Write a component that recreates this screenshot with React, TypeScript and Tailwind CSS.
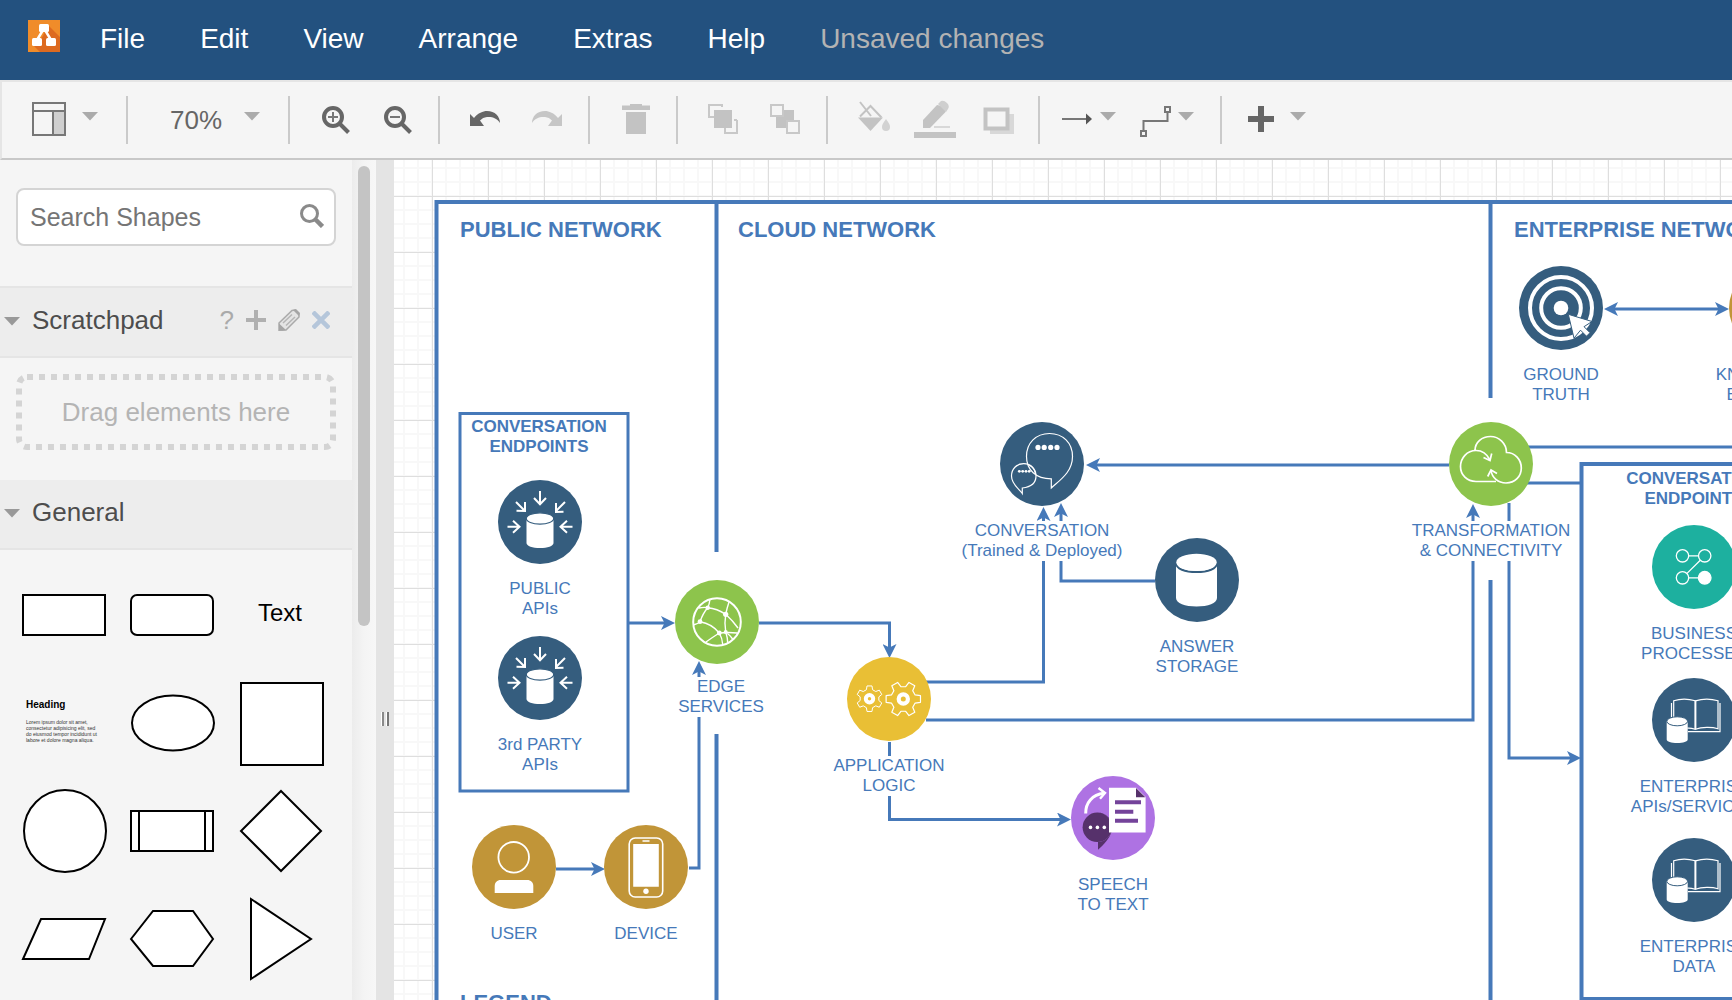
import type { ReactNode } from "react";

const LINE = "#4679b9";
const NAVY = "#355d7e";
const GREEN = "#8dc44c";
const GOLD = "#c19538";

/* ---------- toolbar ---------- */

function Separator() {
  return <div className="h-12 w-[2px] shrink-0 bg-[#cacaca]" />;
}

function Caret() {
  return (
    <svg className="block h-12 w-4 shrink-0" viewBox="0 0 16 48" aria-hidden="true">
      <path d="M0 16h16l-8 8.500z" fill="#ababab" />
    </svg>
  );
}

type ToolProps = { label: string; className?: string; children: ReactNode };

function Tool({ label, className = "", children }: ToolProps) {
  return (
    <button type="button" aria-label={label} className={`flex shrink-0 items-center ${className}`}>
      {children}
    </button>
  );
}

function Glyph({ size, box, children }: { size: string; box: string; children: ReactNode }) {
  return (
    <svg className={`block h-12 shrink-0 ${size}`} viewBox={box} fill="none" aria-hidden="true">
      {children}
    </svg>
  );
}

function Magnifier({ plus }: { plus?: boolean }) {
  return (
    <Glyph size="w-7" box="0 0 28 48">
      <circle cx="11" cy="21" r="9" stroke="#666" strokeWidth="4" />
      <path d="M17.500 27.500 26.500 36.500" stroke="#666" strokeWidth="4" />
      <path d={plus ? "M6 21h10M11 16v10" : "M6 21h10"} stroke="#777" strokeWidth="2" />
    </Glyph>
  );
}

const UNDO_PATH =
  "M0 18l4 4C8 17 13 15 17 15c8 0 13 5.500 13 12-3-5-8-6.500-13-6-3 .3-5 1.500-7 3.500L14 30H0z";

function Toolbar() {
  return (
    <div className="flex h-20 shrink-0 items-center overflow-hidden border-y-2 border-l-2 border-t-[#e5e5e5] border-b-[#c8c8c8] border-l-[#e5e5e5] bg-[#f5f5f5]">
      <Tool label="View layout" className="gap-4 pr-7 pl-[30px]">
        <Glyph size="w-[34px]" box="0 0 34 48">
          <path d="M21 15h12v24H21z" fill="#cfcfcf" />
          <path d="M1 7h32v32H1zM1 15h32M21 15v24" stroke="#777" strokeWidth="2" />
        </Glyph>
        <Caret />
      </Tool>
      <Separator />
      <Tool label="Zoom level" className="gap-[22px] pr-7 pl-[42px]">
        <span className="text-[26px] leading-8 text-[#666]">70%</span>
        <Caret />
      </Tool>
      <Separator />
      <div className="flex gap-[34px] pr-[26px] pl-8">
        <Tool label="Zoom in">
          <Magnifier plus />
        </Tool>
        <Tool label="Zoom out">
          <Magnifier />
        </Tool>
      </div>
      <Separator />
      <div className="flex gap-8 pr-[26px] pl-[30px]">
        <Tool label="Undo">
          <Glyph size="w-[30px]" box="0 0 30 48">
            <path d={UNDO_PATH} fill="#666" />
          </Glyph>
        </Tool>
        <Tool label="Redo">
          <Glyph size="w-[30px]" box="0 0 30 48">
            <path d={UNDO_PATH} fill="#c6c6c6" transform="matrix(-1 0 0 1 30 0)" />
          </Glyph>
        </Tool>
      </div>
      <Separator />
      <Tool label="Delete" className="pr-[26px] pl-8">
        <Glyph size="w-7" box="0 0 28 48">
          <path d="M0 9.500h8V8h12v1.500h8V14H0zM4 16h20v22H4z" fill="#c3c3c3" />
        </Glyph>
      </Tool>
      <Separator />
      <div className="flex gap-8 pr-[26px] pl-[30px]">
        <Tool label="To front">
          <Glyph size="w-[30px]" box="0 0 30 48">
            <path d="M14 11V9H1v12h5M29 24v13H17v-5M26 24h3" stroke="#c8c8c8" strokeWidth="2" />
            <path d="M6 14h18v18H6z" fill="#c3c3c3" />
          </Glyph>
        </Tool>
        <Tool label="To back">
          <Glyph size="w-[30px]" box="0 0 30 48">
            <path d="M6 14h18v18H6z" fill="#c3c3c3" />
            <path d="M1 9h12v11H1zM17 25h12v12H17z" fill="#f5f5f5" stroke="#c8c8c8" strokeWidth="2" />
          </Glyph>
        </Tool>
      </div>
      <Separator />
      <div className="flex pr-6 pl-7">
        <Tool label="Fill color" className="pr-6">
          <Glyph size="w-[34px]" box="0 0 34 48">
            <path d="M4 6 15 20M4 20.500 14.500 10l11 11.500" stroke="#c3c3c3" strokeWidth="2" />
            <path d="M2 21.500h25L14.500 35z" fill="#c3c3c3" />
            <path d="M30 23c3 4 4 6 4 8a4 4 0 0 1-8 0c0-2 1-4 4-8z" fill="#d2d2d2" />
          </Glyph>
        </Tool>
        <Tool label="Line color" className="pr-[26px]">
          <Glyph size="w-[42px]" box="0 0 42 48">
            <path d="M9 24 23 9l10 2-1.500 5L16 32H9z" fill="#c3c3c3" />
            <path d="M24 8l3-3q3-1 6 2t1 6l-2 3z" fill="#cfcfcf" />
            <path d="M20 31h16" stroke="#d8d8d8" strokeWidth="2" />
            <path d="M0 36h42v6H0z" fill="#c3c3c3" />
          </Glyph>
        </Tool>
        <Tool label="Shadow">
          <Glyph size="w-8" box="0 0 32 48">
            <path d="M8 18h24v20H8z" fill="#d8d8d8" />
            <path d="M3.500 13.500h22v19h-22z" fill="#f5f5f5" stroke="#c3c3c3" strokeWidth="4" />
          </Glyph>
        </Tool>
      </div>
      <Separator />
      <div className="flex gap-6 pr-[26px] pl-[22px]">
        <Tool label="Connection" className="gap-2">
          <Glyph size="w-[30px]" box="0 0 30 48">
            <path d="M0 23h26" stroke="#777" strokeWidth="2" />
            <path d="M24 17.500l6 5.500-6 5.500z" fill="#555" />
          </Glyph>
          <Caret />
        </Tool>
        <Tool label="Waypoints" className="gap-[6px]">
          <Glyph size="w-8" box="0 0 32 48">
            <path d="M1 35h5v5H1zM25 11h5v5h-5zM3.500 35V25h24v-9" stroke="#777" strokeWidth="2" />
          </Glyph>
          <Caret />
        </Tool>
      </div>
      <Separator />
      <Tool label="Insert" className="gap-[14px] pl-[26px]">
        <Glyph size="w-7" box="0 0 28 48">
          <path d="M0 23h26M13 10v26" stroke="#666" strokeWidth="6" />
        </Glyph>
        <Caret />
      </Tool>
    </div>
  );
}

/* ---------- sidebar ---------- */

const SHAPES: { name: string; art: ReactNode }[] = [
  { name: "Rectangle", art: <rect x="13" y="34" width="82" height="40" /> },
  { name: "Rounded rectangle", art: <rect x="13" y="34" width="82" height="40" rx="6" /> },
  { name: "Text", art: null },
  { name: "Textbox", art: null },
  { name: "Ellipse", art: <ellipse cx="55" cy="54" rx="41" ry="27.500" /> },
  { name: "Square", art: <rect x="15" y="14" width="82" height="82" /> },
  { name: "Circle", art: <circle cx="55" cy="54" r="41" /> },
  { name: "Process", art: <path d="M13 34h82v40H13zM21 34v40M87 34v40" /> },
  { name: "Diamond", art: <path d="M55 14 95 54 55 94 15 54z" /> },
  { name: "Parallelogram", art: <path d="M13 74 31 34h64L79 74z" /> },
  { name: "Hexagon", art: <path d="M13 54 35 26h40l20 28-20 27H35z" /> },
  { name: "Triangle", art: <path d="M25 14 85 54 25 94z" /> },
];

function ShapeCell({ name, art }: { name: string; art: ReactNode }) {
  if (name === "Text") {
    return (
      <button type="button" className="flex size-[108px] items-center justify-center pb-1 text-2xl text-black">
        Text
      </button>
    );
  }
  if (name === "Textbox") {
    return (
      <button type="button" className="flex size-[108px] flex-col justify-center gap-2 pb-1 pl-4 text-left whitespace-nowrap">
        <span className="block text-[10px] leading-3 font-bold text-black">Heading</span>
        <span className="block text-[5px] leading-[6px] text-[#333]">
          Lorem ipsum dolor sit amet,
          <br />
          consectetur adipisicing elit, sed
          <br />
          do eiusmod tempor incididunt ut
          <br />
          labore et dolore magna aliqua.
        </span>
      </button>
    );
  }
  return (
    <button type="button" aria-label={name} className="size-[108px]">
      <svg className="block size-[108px]" viewBox="0 0 108 108" fill="#fff" stroke="#000" strokeWidth="2" aria-hidden="true">
        {art}
      </svg>
    </button>
  );
}

function SectionTitle({ children }: { children: ReactNode }) {
  return (
    <button type="button" className="flex items-center gap-3 pl-1 text-[26px] leading-8 text-[#4d4d4d]">
      <svg className="size-4" viewBox="0 0 16 16" aria-hidden="true">
        <path d="M0 5h16l-8 8.500z" fill="#999" />
      </svg>
      {children}
    </button>
  );
}

function Sidebar() {
  return (
    <aside className="flex w-[376px] shrink-0 overflow-hidden bg-[#f5f5f5]">
      <div className="flex w-[352px] shrink-0 flex-col">
        <div className="relative mx-4 mt-7 shrink-0">
          <input
            type="search"
            aria-label="Search Shapes"
            placeholder="Search Shapes"
            className="h-[58px] w-full rounded-lg border-2 border-[#d4d4d4] bg-white pr-12 pl-3 text-[25px] text-[#4d4d4d] outline-none placeholder:text-[#757575]"
          />
          <button type="button" aria-label="Search" className="absolute top-4 right-3">
            <svg className="block size-6" viewBox="0 0 24 24" fill="none" stroke="#8a8a8a" aria-hidden="true">
              <circle cx="9.500" cy="9.500" r="8" strokeWidth="3" />
              <path d="m15.500 15.500 7 7" strokeWidth="4.500" />
            </svg>
          </button>
        </div>
        <div className="mt-10 flex h-[72px] shrink-0 items-center justify-between border-y-2 border-[#e5e5e5] bg-[#ededed] pr-[22px] pb-1">
          <SectionTitle>Scratchpad</SectionTitle>
          <div className="flex items-center gap-3 text-[#aaa]">
            <button type="button" aria-label="Help" className="text-[26px] leading-8">
              ?
            </button>
            <button type="button" aria-label="Add">
              <svg className="block size-5" viewBox="0 0 20 20" stroke="#b0b0b0" strokeWidth="4" aria-hidden="true">
                <path d="M0 10h20M10 0v20" />
              </svg>
            </button>
            <button type="button" aria-label="Edit scratchpad">
              <svg className="block size-[22px]" viewBox="0 0 22 22" fill="none" aria-hidden="true">
                <path d="M1 14 14 1.500l3-.5 4 4v3L8 21l-7 .5z" fill="#e4e4e4" stroke="#aaa" strokeWidth="1.500" />
                <path d="M1 14.500 8 21H1zM15 1l3-1 4 4-1 3z" fill="#a5a5a5" />
                <path d="m5 14 9-8.500M8 16.500 17 8" stroke="#b5b5b5" strokeWidth="1.500" />
              </svg>
            </button>
            <button type="button" aria-label="Close scratchpad">
              <svg className="block size-[18px]" viewBox="0 0 18 18" stroke="#b5c6da" strokeWidth="4.500" aria-hidden="true">
                <path d="m1 1 16 16M17 1 1 17" />
              </svg>
            </button>
          </div>
        </div>
        <div className="relative mx-4 mt-4 flex h-[76px] shrink-0 items-center justify-center text-[26px] leading-8 text-[#b4b4b4]">
          <svg className="absolute inset-0" width="320" height="76" viewBox="0 0 320 76" fill="none" aria-hidden="true">
            <rect x="3" y="3" width="314" height="70" rx="8" stroke="#d4d4d4" strokeWidth="6" strokeDasharray="6 6" />
          </svg>
          Drag elements here
        </div>
        <div className="mt-[30px] flex h-[70px] shrink-0 items-center border-b-2 border-[#e5e5e5] bg-[#ededed] pb-1">
          <SectionTitle>General</SectionTitle>
        </div>
        <div className="grid grid-cols-[108px_108px_108px] pt-[11px] pl-[10px]">
          {SHAPES.map((s) => (
            <ShapeCell key={s.name} name={s.name} art={s.art} />
          ))}
        </div>
      </div>
      <div className="flex flex-1 justify-center bg-linear-to-r from-[#ececec] via-[#f4f4f4] to-[#f7f7f7] pt-[6px]">
        <div className="h-[460px] w-3 rounded-full bg-[#c4c4c4]" />
      </div>
    </aside>
  );
}

/* ---------- diagram icons, drawn on an 84 x 84 disc ---------- */

function gear(cx: number, cy: number, outer: number, inner: number, turn: number) {
  const points: string[] = [];
  for (let i = 0; i < 6; i++) {
    const mid = turn + i * 60;
    const corners: [number, number][] = [
      [-19, inner],
      [-11, outer],
      [11, outer],
      [19, inner],
    ];
    for (const [offset, radius] of corners) {
      const a = ((mid + offset) * Math.PI) / 180;
      points.push(`${(cx + radius * Math.cos(a)).toFixed(2)} ${(cy + radius * Math.sin(a)).toFixed(2)}`);
    }
  }
  return `M${points.join("L")}z`;
}

const apiArt = (
  <g fill="none" stroke="#fff" strokeWidth="2">
    <path d="M28.500 39v24c0 3 6 5 13.500 5s13.500-2 13.500-5V39z" fill="#fff" stroke="none" />
    <ellipse cx="42" cy="38.500" rx="13.700" ry="5.700" fill="#fff" stroke={NAVY} strokeWidth="1.200" />
    <path d="M42 11v13M36 18l6 6.300 6-6.300M9.500 46.700h12M15 40.700l6.500 6-6.500 6M74.500 46.700h-12M69 40.700l-6.500 6 6.500 6M18 22l9 9M18.500 30.700l8.500.3V22M67 22l-9 9M65.500 31.700 58 32v-9" />
  </g>
);

const globeArt = (
  <g fill="none" stroke="#fff" strokeWidth="1.400">
    <circle cx="42" cy="42" r="23.800" strokeWidth="2" />
    <path d="M35 19q-.5 5-2.300 8.700Q28 33 25 41.700q-2 2-6 3M24 28q5-1 8.700-.3Q42 28.500 50.700 34.300 58 41 63 48M54 22q-2 6-3.300 12.300 -1.500 9 0 17.700 2 6 2 11M25 41.700q12 2 19.300 11.300 3 5 3.500 12M44.300 53Q38 57 31 62M44.300 53q9-1 18 0M50.700 52q4 3 7 7" />
    <g fill="#fff" stroke="none">
      <circle cx="32.700" cy="27.700" r="2.200" />
      <circle cx="50.700" cy="34.300" r="2.600" />
      <circle cx="25" cy="41.700" r="2.400" />
      <circle cx="44.300" cy="53" r="2.400" />
      <circle cx="50.700" cy="52" r="2" />
    </g>
  </g>
);

const chatArt = (
  <g fill="none" stroke="#fff" strokeWidth="1.200">
    <path d="M51.300 56.800V66C60 58 72.500 50 72.500 34.500c0-13.500-9.500-23-23-23s-23 9.500-23 23 9.500 22.300 24.800 22.300z" />
    <path d="M22.300 66v5.500C19 66.500 11.500 62.500 11.500 54c0-7 5-12.300 12.200-12.300S36 47 36 54c0 7.500-5 11-13.700 12z" />
    <path d="M29 43c3.500 1.800 6 5 6.500 9" />
    <g fill="#fff" stroke="none">
      <circle cx="38" cy="25.400" r="2.600" />
      <circle cx="44.200" cy="25.400" r="2.600" />
      <circle cx="50.700" cy="25.400" r="2.600" />
      <circle cx="57" cy="25.400" r="2.600" />
      <circle cx="19.300" cy="49.300" r="1.400" />
      <circle cx="22.700" cy="49.300" r="1.400" />
      <circle cx="26" cy="49.300" r="1.400" />
      <circle cx="29.200" cy="49.300" r="1.400" />
    </g>
  </g>
);

const storageArt = (
  <g fill="#fff">
    <path d="M21 26v34c0 5 9 8.500 20.500 8.500S62 65 62 60V26z" />
    <path d="M21 25c0 6 9 9 20.500 9S62 31 62 25" fill="none" stroke={NAVY} strokeWidth="2" />
    <path d="M20 22h43v3H20z" fill={NAVY} />
    <ellipse cx="41.500" cy="24.300" rx="20.200" ry="8.600" />
  </g>
);

const gearsArt = (
  <g fill="none" stroke="#fff">
    <path d={gear(22.5, 41.7, 13, 9.5, 30)} strokeWidth="1" strokeLinejoin="round" />
    <path d={gear(56.3, 42, 17.5, 12.5, 0)} strokeWidth="1.200" strokeLinejoin="round" />
    <circle cx="22.500" cy="41.700" r="3.700" strokeWidth="4" />
    <circle cx="56.300" cy="42" r="4.600" strokeWidth="4.200" />
  </g>
);

const speechArt = (
  <g fill="none">
    <path d="M26.300 36.600a14.700 14.700 0 1 1 0 29.400h.7v7.700C33 69 38.500 62 40.500 56V46a14.700 14.700 0 0 0-14.200-9.400z" fill="#56316b" />
    <circle cx="26.300" cy="51.300" r="14.700" fill="#56316b" />
    <g fill="#fff">
      <circle cx="19.500" cy="51.400" r="1.800" />
      <circle cx="26.400" cy="51.400" r="1.800" />
      <circle cx="33.300" cy="51.400" r="1.800" />
    </g>
    <path d="M38 11.700h27.300l9.300 9.300v35.500H38z" fill="#fff" />
    <path d="M65 12v9.200h9.300z" fill="#56316b" />
    <path d="M44 26.300h26M44 35.700h18.300M44 44.700h23" stroke="#74439a" strokeWidth="4" />
    <path d="M14.700 37.500C14.500 27 21 18.500 33 17.300" stroke="#fff" strokeWidth="3" />
    <path d="M27.500 12l6.500 5-5 5.700" stroke="#fff" strokeWidth="2.400" />
  </g>
);

const targetArt = (
  <g fill="none" stroke="#fff" strokeWidth="4">
    <circle cx="42" cy="42" r="31" />
    <circle cx="42" cy="42" r="19.800" />
    <circle cx="42" cy="42" r="7.300" fill="#fff" stroke="none" />
    <path d="M49.300 48.300 73 55.500l-8 5.200 6 6-3.500 3.500-6-6-6.500 8z" fill="#fff" stroke={NAVY} strokeWidth="1" />
  </g>
);

const cloudArt = (
  <g fill="none" stroke="#fff" strokeWidth="1.700">
    <path d="M47 59.500H27c-9 0-15.500-6.500-15.500-15S18 28.500 27 28.500c6 0 11 3.500 14 9.500M26 28.500c0-8.500 7-14 15.500-14s16 7 16 16c8.500 0 14.800 7 14.800 15.500S66 61 57 61c-8 0-14-5.500-15-12.500" />
    <path d="M34.500 35.500l6.500 3 1.700-7M38.700 54.500 42 48l6 3.500" />
  </g>
);

const processArt = (
  <g fill="none" stroke="#fff" strokeWidth="1.300">
    <path d="M36.700 30.800h9.700M48.300 35.200 35 48.400M36.700 52.800h9.700" />
    <circle cx="30.500" cy="30.800" r="6.200" />
    <circle cx="52.700" cy="30.800" r="6.200" />
    <circle cx="30.500" cy="52.800" r="6.200" />
    <circle cx="52.700" cy="52.800" r="6.300" fill="#fff" />
  </g>
);

const bookArt = (
  <g fill="none" stroke="#fff" strokeWidth="1.200">
    <path d="M21.700 40V22.800c6-2 15-2 21.600 0 7-2 16-2 22.700 0v28c-6-2-16-2-22.700.5-3-1-5-1.500-8-1.200" />
    <path d="M43.400 22.500v29" strokeWidth="2" />
    <path d="M19.500 25v14M68 25v28.700H36" />
    <path d="M14.700 44v17.500c0 2 4.500 3.500 10.500 3.500s10.500-1.500 10.500-3.500V44z" fill="#fff" stroke="none" />
    <ellipse cx="25.200" cy="43.300" rx="10.400" ry="4.500" fill="#fff" stroke={NAVY} strokeWidth="1" />
  </g>
);

const userArt = (
  <g>
    <circle cx="41.700" cy="32.300" r="15.300" fill="none" stroke="#fff" strokeWidth="1.800" />
    <path d="M22.700 68v-7c0-3.500 2.500-6 6-6h26.600c3.500 0 6 2.500 6 6v7z" fill="#fff" />
  </g>
);

const phoneArt = (
  <g>
    <rect x="25.200" y="13" width="33.500" height="59" rx="6" fill="none" stroke="#fff" strokeWidth="1.600" />
    <path d="M29.200 19h25.600v42.700H29.200zM38.500 15.300h7v1.500h-7z" fill="#fff" />
    <circle cx="42" cy="66.300" r="2.700" fill="#fff" />
  </g>
);

/* ---------- diagram ---------- */

type DiagramNode = { at: string; color: string; art: ReactNode; label: string[]; labelClass?: string };

const NODES: DiagramNode[] = [
  { at: "left-[66px] top-[320px]", color: NAVY, art: apiArt, label: ["PUBLIC", "APIs"] },
  { at: "left-[66px] top-[476px]", color: NAVY, art: apiArt, label: ["3rd PARTY", "APIs"] },
  { at: "left-[243px] top-[420px]", color: GREEN, art: globeArt, label: ["EDGE", "SERVICES"], labelClass: "ml-2 -mt-[2px]" },
  { at: "left-[40px] top-[665px]", color: GOLD, art: userArt, label: ["USER"] },
  { at: "left-[172px] top-[665px]", color: GOLD, art: phoneArt, label: ["DEVICE"] },
  { at: "left-[415px] top-[497px]", color: "#e9bf35", art: gearsArt, label: ["APPLICATION", "LOGIC"] },
  { at: "left-[639px] top-[616px]", color: "#ae72e3", art: speechArt, label: ["SPEECH", "TO TEXT"] },
  { at: "left-[568px] top-[262px]", color: NAVY, art: chatArt, label: ["CONVERSATION", "(Trained & Deployed)"] },
  { at: "left-[723px] top-[378px]", color: NAVY, art: storageArt, label: ["ANSWER", "STORAGE"] },
  { at: "left-[1087px] top-[106px]", color: NAVY, art: targetArt, label: ["GROUND", "TRUTH"] },
  { at: "left-[1017px] top-[262px]", color: GREEN, art: cloudArt, label: ["TRANSFORMATION", "& CONNECTIVITY"] },
  { at: "left-[1297px] top-[106px]", color: GOLD, art: userArt, label: ["KNOWLEDGE", "ENGINEER"] },
  { at: "left-[1220px] top-[365px]", color: "#1db09f", art: processArt, label: ["BUSINESS", "PROCESSES"] },
  { at: "left-[1220px] top-[518px]", color: NAVY, art: bookArt, label: ["ENTERPRISE", "APIs/SERVICES"] },
  { at: "left-[1220px] top-[678px]", color: NAVY, art: bookArt, label: ["ENTERPRISE", "DATA"] },
];

const HEADINGS = [
  { at: "left-[66px] top-[58px]", text: "PUBLIC NETWORK" },
  { at: "left-[344px] top-[58px]", text: "CLOUD NETWORK" },
  { at: "left-[1120px] top-[58px]", text: "ENTERPRISE NETWORK" },
  { at: "left-[66px] top-[831px]", text: "LEGEND" },
];

const ARROWS = [
  "M234 463H273",
  "M365 463H495.500V490",
  "M532 522H649.500V355",
  "M532 560H1079V352",
  "M495.500 582V659.500H669",
  "M761 421H667V351",
  "M1055 305H700",
  "M1115 343V598H1179",
  "M162 709H203",
  "M295 708H305V509",
];

function Edges() {
  return (
    <svg className="absolute top-0 left-0 overflow-visible" width="1338" height="840" viewBox="0 0 1338 840" fill="none" stroke={LINE} aria-hidden="true">
      <defs>
        <marker id="arrow" markerUnits="userSpaceOnUse" markerWidth="14" markerHeight="14" refX="6" refY="7" orient="auto-start-reverse">
          <path d="M14 7 0 0l3.500 7L0 14z" fill={LINE} stroke="none" />
        </marker>
      </defs>
      <path d="M42.500 900V42H2600V900z" fill="#fff" strokeWidth="4" />
      <path d="M322.500 42V392M322.500 574V900M1096.500 42V238M1096.500 420V900" strokeWidth="4" />
      <rect x="66" y="253.500" width="168" height="377.500" strokeWidth="3" />
      <rect x="1187.500" y="304" width="400" height="535" strokeWidth="4" />
      <g strokeWidth="3">
        {ARROWS.map((d) => (
          <path key={d} d={d} markerEnd="url(#arrow)" />
        ))}
        <path d="M1218 149H1327" markerStart="url(#arrow)" markerEnd="url(#arrow)" />
        <path d="M1130 287H1500M1130 323H1187" />
      </g>
    </svg>
  );
}

function BoxTitle({ at }: { at: string }) {
  return (
    <div className={`absolute w-40 text-center text-[17px] leading-5 font-bold ${at}`}>
      CONVERSATION
      <br />
      ENDPOINTS
    </div>
  );
}

function Canvas() {
  return (
    <main className="relative min-w-0 flex-1 overflow-hidden bg-white bg-[linear-gradient(#dedede_1px,transparent_1px),linear-gradient(90deg,#dedede_1px,transparent_1px),linear-gradient(#f8f8f8_2px,transparent_2px),linear-gradient(90deg,#f8f8f8_2px,transparent_2px)] bg-size-[56px_56px,56px_56px,14px_14px,14px_14px] bg-position-[38px_36px,38px_36px,9px_7px,9px_7px] text-[#4679b9]">
      <Edges />
      {HEADINGS.map((h) => (
        <h2 key={h.text} className={`absolute text-[22px] leading-6 font-bold whitespace-nowrap ${h.at}`}>
          {h.text}
        </h2>
      ))}
      <BoxTitle at="left-[65px] top-[257px]" />
      <BoxTitle at="left-[1220px] top-[309px]" />
      {NODES.map((n) => (
        <div key={n.at} className={`absolute flex w-40 flex-col items-center gap-[15px] ${n.at}`}>
          <svg className="block size-[84px] shrink-0" viewBox="0 0 84 84" aria-hidden="true">
            <circle cx="42" cy="42" r="42" fill={n.color} />
            {n.art}
          </svg>
          <div className={`bg-white text-center text-[17px] leading-5 whitespace-nowrap ${n.labelClass ?? ""}`}>
            {n.label.map((line) => (
              <div key={line}>{line}</div>
            ))}
          </div>
        </div>
      ))}
    </main>
  );
}

/* ---------- page ---------- */

const MENUS = ["File", "Edit", "View", "Arrange", "Extras", "Help"];

function Header() {
  return (
    <header className="flex h-20 shrink-0 items-center overflow-hidden bg-[#23517f] pb-[2px] pl-7 text-[28px] leading-8 whitespace-nowrap text-white">
      <a href="#" aria-label="Home" className="mr-10 shrink-0 pb-[6px]">
        <svg className="block size-8" viewBox="0 0 32 32" aria-hidden="true">
          <path d="M0 0h32v32H0z" fill="#f08c2a" />
          <path d="M20 5 32 17v15H12L6 26l9-10z" fill="#dd6a20" />
          <path d="M15 10 9 20M17 10l6 10" stroke="#fff" strokeWidth="2.500" />
          <rect x="11" y="4" width="10" height="8" rx="1.500" fill="#fff" />
          <rect x="4" y="18" width="10" height="8" rx="1.500" fill="#fff" />
          <rect x="18" y="18" width="10" height="8" rx="1.500" fill="#fff" />
        </svg>
      </a>
      <nav className="flex gap-[55px]">
        {MENUS.map((m) => (
          <button key={m} type="button">
            {m}
          </button>
        ))}
        <button type="button" className="text-[#b3b3b3]">
          Unsaved changes
        </button>
      </nav>
    </header>
  );
}

export default function App() {
  return (
    <div className="flex h-screen flex-col overflow-hidden bg-[#f5f5f5] font-['Liberation_Sans',Arial,sans-serif]">
      <Header />
      <Toolbar />
      <div className="flex min-h-0 flex-1">
        <Sidebar />
        <div className="flex w-[18px] shrink-0 items-start justify-center gap-[2px] bg-[#e4e4e4] pt-[552px]" role="separator" aria-orientation="vertical">
          <div className="h-[14px] w-[3px] border-l border-white bg-[#8a8a8a]" />
          <div className="h-[14px] w-[3px] border-l border-white bg-[#777]" />
        </div>
        <Canvas />
      </div>
    </div>
  );
}
